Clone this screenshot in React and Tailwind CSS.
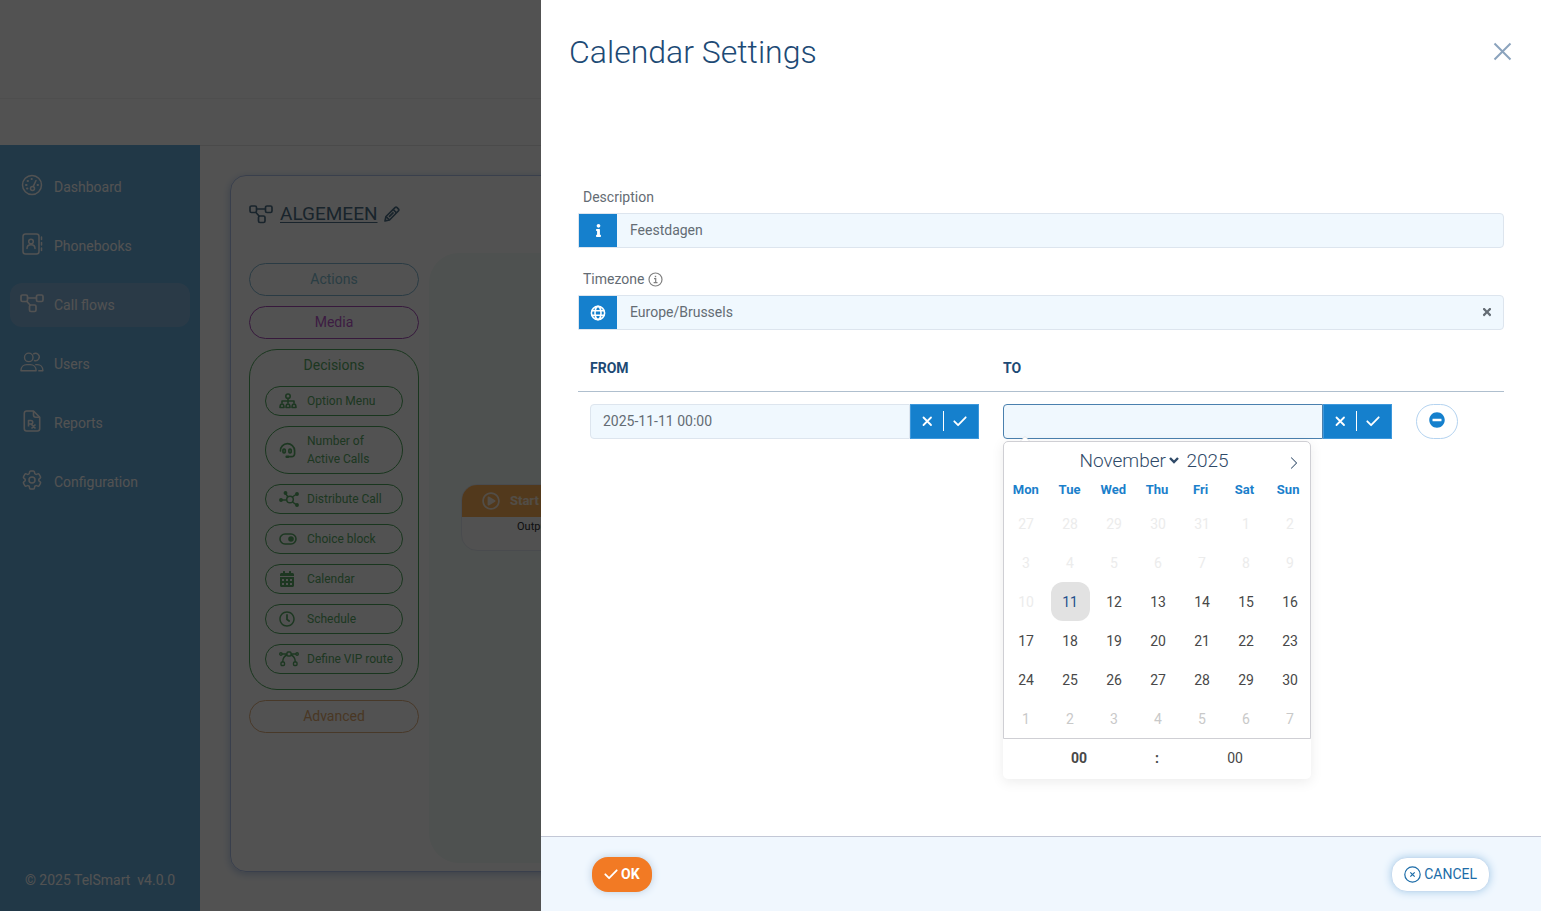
import React from "react";
import { FaCalendarAlt, FaInfo, FaMinusCircle, FaRegClock, FaRegPlayCircle, FaTimes } from "react-icons/fa";
import { BsChevronRight } from "react-icons/bs";
import { HiOutlineCog6Tooth } from "react-icons/hi2";

const GaugeIcon = () => (
  <svg width="22" height="22" viewBox="0 0 22 22" fill="none" stroke="currentColor" strokeWidth="1.5" strokeLinecap="round">
    <circle cx="11" cy="11" r="9.5" />
    <circle cx="11.5" cy="14.5" r="2" />
    <path d="M12.2 12.6 15 6.5" />
    <path d="M5 11h.6M6.6 7h.4M10.6 5h.2M16.6 11h.4M6 14.6h.4" strokeWidth="2" />
  </svg>
);

const BookIcon = () => (
  <svg width="22" height="22" viewBox="0 0 22 22" fill="none" stroke="currentColor" strokeWidth="1.5" strokeLinecap="round">
    <rect x="2" y="1" width="16" height="20" rx="2.5" />
    <circle cx="10" cy="8.5" r="2.3" />
    <path d="M6 15.5c0-2.4 1.5-3.7 4-3.7s4 1.3 4 3.7M20.5 4v2.5M20.5 9.5V12M20.5 15v2.5" />
  </svg>
);

const FlowIcon = () => (
  <svg width="24" height="20" viewBox="0 0 24 20" fill="none" stroke="currentColor" strokeWidth="1.7">
    <rect x="1" y="2" width="6.5" height="6.5" rx="1.5" />
    <rect x="16.5" y="2" width="6.5" height="6.5" rx="1.5" />
    <rect x="9.5" y="12" width="6.5" height="6.5" rx="1.5" />
    <path d="M7.5 5h9M6.5 8l4 4.5" />
  </svg>
);

const UsersIcon = () => (
  <svg width="26" height="22" viewBox="0 0 26 22" fill="none" stroke="currentColor" strokeWidth="1.5" strokeLinejoin="round">
    <circle cx="9.5" cy="6" r="4.6" />
    <path d="M1 20.5c0-4.3 3-6.6 6.5-6.6h3.5c3.5 0 6.5 2.3 6.5 6.6Z" />
    <path d="M14.3 2.5a4 4 0 1 1 .8 6.7M16.5 13.9h2.3c3.3 0 6 2.4 6 6.6h-5" />
  </svg>
);

const ReportIcon = () => (
  <svg width="18" height="22" viewBox="0 0 18 22" fill="none" stroke="currentColor" strokeWidth="1.6" strokeLinejoin="round">
    <path d="M10.5 1h-7A2.2 2.2 0 0 0 1.3 3.2v15.6A2.2 2.2 0 0 0 3.5 21h11a2.2 2.2 0 0 0 2.2-2.2V7.200Z" />
    <path d="M10.5 1v4a2.2 2.2 0 0 0 2.2 2.2h4" />
    <path d="M5.5 16.5v-6H8a1.7 1.7 0 0 1 0 3.5H5.5M8 14l4.5 4.5M12.5 14.5l-4 4" />
  </svg>
);

const SitemapIcon = () => (
  <svg width="18" height="16" viewBox="0 0 18 16" fill="none" stroke="currentColor" strokeWidth="1.6" strokeLinejoin="round">
    <circle cx="9" cy="3.2" r="2.2" />
    <path d="M9 5.5v5M3 10.5V8h12v2.5" />
    <path d="M1 14.500c0-2 .7-3.500 2-3.500s2 1.500 2 3.500ZM7 14.500c0-2 .7-3.500 2-3.500s2 1.500 2 3.500ZM13 14.500c0-2 .7-3.500 2-3.500s2 1.500 2 3.500Z" />
  </svg>
);

const AgentIcon = () => (
  <svg width="17" height="17" viewBox="0 0 18 18" fill="none" stroke="currentColor" strokeWidth="1.8" strokeLinecap="round">
    <path d="M1.500 9.500A7.500 7.500 0 0 1 16.500 9v3.500a3 3 0 0 1-3 3H9.500" />
    <rect x="4.2" y="7.5" width="2.4" height="4" rx="1" />
    <rect x="10.5" y="7.5" width="2.4" height="4" rx="1" />
    <path d="M9.5 15.6H8" strokeWidth="2.5" />
  </svg>
);

const NetworkIcon = () => (
  <svg width="20" height="16" viewBox="0 0 20 16" fill="currentColor" stroke="currentColor" strokeWidth="1.5">
    <circle cx="11" cy="8.5" r="3.3" fill="none" />
    <path d="M3 9h4.7M9 6 6.500 2.500M13.300 6l3.700-2.500M13.500 11l4 2.800" />
    <circle cx="2" cy="9" r="1.2" />
    <circle cx="6.5" cy="2" r="1.2" />
    <circle cx="18" cy="3" r="1.2" />
    <circle cx="18" cy="14" r="1.2" />
  </svg>
);

const ToggleIcon = () => (
  <svg width="18" height="12" viewBox="0 0 18 12" fill="none" stroke="currentColor" strokeWidth="1.6">
    <rect x="1" y="1" width="16" height="10" rx="5" />
    <circle cx="12" cy="6" r="2.8" fill="currentColor" stroke="none" />
  </svg>
);

const CurveIcon = () => (
  <svg width="20" height="16" viewBox="0 0 20 16" fill="none" stroke="currentColor" strokeWidth="1.4">
    <circle cx="1.9" cy="3" r="1.2" />
    <circle cx="18.1" cy="3" r="1.2" />
    <rect x="8" y="1" width="4" height="4" rx="1" />
    <rect x="2" y="11" width="3.5" height="3.5" rx="1" />
    <rect x="14.5" y="11" width="3.5" height="3.5" rx="1" />
    <path d="M3 3h5M12 3h5M8 4c-2.800 1-4.200 3.500-4.300 7M12 4c2.800 1 4.200 3.500 4.300 7" />
  </svg>
);

const PencilIcon = () => (
  <svg width="16" height="16" viewBox="0 0 16 16" fill="none" stroke="currentColor" strokeWidth="1.7" strokeLinejoin="round">
    <path d="m1 15 1-4.500L11 1.700a1.500 1.500 0 0 1 2.100 0l1.200 1.200a1.500 1.500 0 0 1 0 2.100L5.500 14Z" />
    <path d="m9.200 3.500 3.300 3.300M2 10.500 5.500 14M5 10.800l4.500-4.500" />
  </svg>
);

const GlobeIcon = () => (
  <svg width="16" height="16" viewBox="0 0 16 16" fill="none" stroke="currentColor" strokeWidth="1.6">
    <circle cx="8" cy="8" r="6.6" />
    <ellipse cx="8" cy="8" rx="3" ry="6.6" />
    <path d="M1.7 5.8h12.6M1.7 10.2h12.6" />
  </svg>
);

const InfoIcon = () => (
  <svg width="15" height="15" viewBox="0 0 15 15" fill="none" stroke="#808080" strokeWidth="1.2">
    <circle cx="7.5" cy="7.5" r="6.5" />
    <path d="M6 6.6h1.7v4M5.6 10.7h3.9" />
    <path d="M6.8 4.5h1.4" strokeWidth="1.4" />
  </svg>
);

const CheckIcon = () => (
  <svg width="14" height="14" viewBox="0 0 14 14" fill="none" stroke="currentColor" strokeWidth="1.8" strokeLinecap="round" strokeLinejoin="round">
    <path d="m1.300 7.300 3.800 3.900 7.600-7.900" />
  </svg>
);

const CrossIcon = () => (
  <svg width="12" height="12" viewBox="0 0 12 12" fill="none" stroke="currentColor" strokeWidth="1.8" strokeLinecap="round">
    <path d="m2.500 2.500 7.500 7.500M10 2.500 2.500 10" />
  </svg>
);

const CancelIcon = () => (
  <svg width="17" height="17" viewBox="0 0 17 17" fill="none" stroke="currentColor" strokeWidth="1.2">
    <circle cx="8.5" cy="8.5" r="7.7" />
    <path d="m6.300 6.300 4.400 4.400M10.700 6.300l-4.400 4.400" />
  </svg>
);

const menu = [
  { name: "Dashboard", icon: <GaugeIcon /> },
  { name: "Phonebooks", icon: <BookIcon /> },
  { name: "Call flows", icon: <FlowIcon />, active: true },
  { name: "Users", icon: <UsersIcon /> },
  { name: "Reports", icon: <ReportIcon /> },
  { name: "Configuration", icon: <HiOutlineCog6Tooth size={24} /> },
];

const decisions = [
  { name: "Option Menu", icon: <SitemapIcon /> },
  { name: "Number of Active Calls", icon: <AgentIcon /> },
  { name: "Distribute Call", icon: <NetworkIcon /> },
  { name: "Choice block", icon: <ToggleIcon /> },
  { name: "Calendar", icon: <FaCalendarAlt size={16} /> },
  { name: "Schedule", icon: <FaRegClock size={16} /> },
  { name: "Define VIP route", icon: <CurveIcon /> },
];

const weekdays = ["Mon", "Tue", "Wed", "Thu", "Fri", "Sat", "Sun"];

// six weeks, starting on Monday 27 October 2025
const days = Array.from({ length: 42 }, (_, i) => {
  const date = new Date(2025, 9, 27 + i);
  return {
    key: i,
    day: date.getDate(),
    disabled: i < 15,
    selected: i === 15,
    next: i > 34,
  };
});

const dayColor = (d) => {
  if (d.selected) return "rounded-xl bg-[#e2e2e2] text-[#24508c]";
  if (d.disabled) return "text-[#ececec]";
  if (d.next) return "text-[#c9c9c9]";
  return "text-[#484848]";
};

const Sidebar = () => (
  <aside className="flex w-[200px] shrink-0 flex-col justify-between bg-[#66addc] px-2.5 pt-5 pb-[21px] text-sm text-white">
    <nav className="flex flex-col gap-[15px]">
      {menu.map((item) => (
        <a
          key={item.name}
          href="#"
          className={
            item.active
              ? "flex h-11 items-center rounded-xl bg-[#84b4dc] px-2.5"
              : "flex h-11 items-center px-2.5"
          }
        >
          <span className="mr-2.5 mb-1 flex w-6 shrink-0 justify-center">{item.icon}</span>
          {item.name}
        </a>
      ))}
    </nav>
    <p className="text-center">© 2025 TelSmart &nbsp;v4.0.0</p>
  </aside>
);

const Blocks = () => (
  <div className="flex w-[170px] shrink-0 flex-col gap-2.5 pt-2.5 text-sm">
    <button className="h-[33px] rounded-full border border-[#84b8d2] pb-0.5 text-[#84c0d2]">Actions</button>
    <button className="h-[33px] rounded-full border border-[#aa50bc] pb-0.5 text-[#bc58cc]">Media</button>
    <div className="rounded-[28px] border border-[#50a85e] px-[15px] pt-[5px] pb-[15px] text-[#5aac68]">
      <h2 className="text-center leading-5">Decisions</h2>
      <div className="mt-[11px] flex flex-col gap-2.5 text-xs">
        {decisions.map((item) => (
          <button
            key={item.name}
            className="flex min-h-[30px] items-center rounded-[24px] border border-[#50a85e] py-[5px] pl-[13px] text-left leading-[18px]"
          >
            <span className="flex w-7 shrink-0">{item.icon}</span>
            <span className={item.name.length > 20 ? "w-20" : "whitespace-nowrap"}>{item.name}</span>
          </button>
        ))}
      </div>
    </div>
    <button className="h-[33px] rounded-full border border-[#e0b080] pb-0.5 text-[#e4ac70]">Advanced</button>
  </div>
);

const FlowPage = () => (
  <div className="flex h-screen flex-col bg-white">
    <div className="h-[99px] shrink-0 border-b border-[#f2f2f2]" />
    <div className="h-[46px] shrink-0" />
    <div className="flex min-h-0 flex-1">
      <Sidebar />
      <main className="flex min-w-0 flex-1 flex-col border-t border-[#e6e6e6] px-[30px] pt-[29px] pb-[39px]">
        <section className="flex flex-1 flex-col overflow-hidden rounded-[16px] border border-[#b0c4ec] px-[18px] pt-6 pb-2 shadow-[0_2px_8px_#b8cce8]">
          <div className="flex h-7 items-center text-[#4f7288]">
            <FlowIcon />
            <h1 className="mr-1.5 ml-[7px] text-[19px] leading-7 underline underline-offset-2">ALGEMEEN</h1>
            <button aria-label="Rename">
              <PencilIcon />
            </button>
          </div>
          <div className="mt-[25px] flex min-h-0 flex-1 gap-2.5">
            <Blocks />
            <div className="flex-1 rounded-[30px] bg-[#f2faf7] pt-[231px] pl-8">
              <div className="w-44 overflow-hidden rounded-[16px] border border-[#e4eaf2] bg-[#fafafa]">
                <div className="flex h-8 items-center gap-2.5 bg-[#ffb258] pl-5 text-[13px] font-bold text-white/80">
                  <FaRegPlayCircle size={18} />
                  Start
                </div>
                <p className="h-[33px] pt-0.5 pl-[55px] text-[11px] text-[#303030]">Output</p>
              </div>
            </div>
          </div>
        </section>
      </main>
    </div>
  </div>
);

const DateField = ({ id, label, value, open }) => (
  <div className="flex h-[35px]">
    <input
      id={id}
      aria-label={label}
      defaultValue={value}
      className={
        open
          ? "min-w-0 flex-1 rounded-l border border-[#4a80ae] bg-[#f0f8fe] px-3 outline-none"
          : "min-w-0 flex-1 rounded-l border border-[#dde5ee] bg-[#f0f8fe] px-3 outline-none"
      }
    />
    <div className="flex w-[69px] items-center border border-[#3d98dc] bg-[#1580cd] text-white">
      <button aria-label="Clear" className="flex w-8 justify-center">
        <CrossIcon />
      </button>
      <span className="h-5 w-px bg-white" />
      <button aria-label="Confirm" className="flex w-8 justify-center">
        <CheckIcon />
      </button>
    </div>
  </div>
);

const DatePicker = () => (
  <div className="absolute top-[49px] left-3 z-10 w-[308px] rounded-[5px] bg-white text-sm shadow-[0_3px_13px_rgba(0,0,0,0.08)]">
    <span className="absolute bottom-full left-[17px] border-[5px] border-transparent border-b-[#e6e6e6]" />
    <span className="absolute bottom-full left-[18px] border-4 border-transparent border-b-white" />
    <div className="rounded-t-[5px] border border-[#cfcfd4]">
      <div className="relative flex h-[35px] items-center justify-center pt-[3px] text-[19px] font-light text-[#2f4a68]">
        <div className="relative flex items-center">
          <select
            aria-label="Month"
            defaultValue="November"
            className="appearance-none bg-transparent pr-3.5 outline-none"
          >
            <option>November</option>
            <option>December</option>
          </select>
          <svg className="pointer-events-none absolute right-0.5" width="10" height="7" viewBox="0 0 10 7" fill="none" stroke="currentColor" strokeWidth="2.4">
            <path d="m1 1 4 4 4-4" />
          </svg>
        </div>
        <input aria-label="Year" defaultValue="2025" className="ml-1.5 w-12 bg-transparent outline-none" />
        <button aria-label="Next month" className="absolute top-3.5 right-[9px]">
          <BsChevronRight size={14} />
        </button>
      </div>
      <div className="grid h-[27px] grid-cols-7 text-center text-[13px] font-bold text-[#1b80cb]">
        {weekdays.map((name) => (
          <span key={name} className="leading-[25px]">{name}</span>
        ))}
      </div>
      <div className="grid w-[308px] grid-cols-7 justify-items-center">
        {days.map((d) => (
          <button key={d.key} disabled={d.disabled} className={"size-[39px] pt-0.5 " + dayColor(d)}>
            {d.day}
          </button>
        ))}
      </div>
    </div>
    <div className="flex h-10 items-center pb-0.5 text-[#484848]">
      <input aria-label="Hour" defaultValue="00" className="min-w-0 flex-1 bg-transparent text-center font-bold outline-none" />
      <span className="font-bold">:</span>
      <input aria-label="Minute" defaultValue="00" className="min-w-0 flex-1 bg-transparent text-center outline-none" />
    </div>
  </div>
);

const CalendarSettings = () => (
  <div
    role="dialog"
    aria-labelledby="dialogtitle"
    className="fixed inset-y-0 right-0 flex w-[1000px] max-w-full flex-col bg-white text-sm text-[#646c74]"
  >
    <header className="flex items-center justify-between px-7 pt-7">
      <h1 id="dialogtitle" className="text-[32px] leading-12 font-light text-[#1d4a75]">
        Calendar Settings
      </h1>
      <button aria-label="Close" className="pb-0.5">
        <svg width="21" height="21" viewBox="0 0 21 21" fill="none" stroke="#8ba3bd" strokeWidth="2">
          <path d="m2.500 2.500 16 16M18.500 2.500l-16 16" />
        </svg>
      </button>
    </header>

    <div className="flex-1 px-[37px] pt-[111px]">
      <label htmlFor="description" className="ml-[5px] block leading-5">
        Description
      </label>
      <div className="mt-1.5 flex h-[35px] overflow-hidden rounded-r border border-[#dde5ee] bg-[#f0f8fe]">
        <span className="flex w-[38px] items-center justify-center bg-[#1580cd] text-white">
          <FaInfo size={13} />
        </span>
        <input id="description" defaultValue="Feestdagen" className="flex-1 px-[13px] pb-0.5 outline-none" />
      </div>

      <div className="mt-[21px] ml-[5px] flex items-center gap-1 leading-5">
        <label htmlFor="timezone">Timezone</label>
        <InfoIcon />
      </div>
      <div className="mt-1.5 flex h-[35px] overflow-hidden rounded-r border border-[#dde5ee] bg-[#f0f8fe]">
        <span className="flex w-[38px] items-center justify-center bg-[#1580cd] text-white">
          <GlobeIcon />
        </span>
        <input id="timezone" defaultValue="Europe/Brussels" className="flex-1 px-[13px] pb-0.5 outline-none" />
        <button aria-label="Clear timezone" className="pr-2.5 pb-0.5">
          <FaTimes size={12} />
        </button>
      </div>

      <table className="mt-[15px] w-full table-fixed">
        <thead>
          <tr className="h-[46px] border-b border-[#afbfce] text-left text-[#1d4a75]">
            <th className="px-3 font-bold">FROM</th>
            <th className="px-3 font-bold">TO</th>
            <th className="w-[100px]" />
          </tr>
        </thead>
        <tbody>
          <tr>
            <td className="px-3 py-3">
              <DateField id="datefrom" label="From" value="2025-11-11 00:00" />
            </td>
            <td className="relative px-3 py-3">
              <DateField id="dateto" label="To" value="" open />
              <DatePicker />
            </td>
            <td className="px-3 py-3">
              <button
                aria-label="Remove period"
                className="flex h-[35px] w-[42px] items-center justify-center rounded-full border border-[#b4d3f0] pb-0.5 text-[#1580cd]"
              >
                <FaMinusCircle size={16} />
              </button>
            </td>
          </tr>
        </tbody>
      </table>
    </div>

    <footer className="flex h-[75px] items-center justify-between border-t border-[#c3c8d6] bg-[#f0f7fe] px-[51px]">
      <button className="flex h-[35px] items-center gap-[3px] rounded-[16px] bg-[#f27a24] px-3 font-bold text-white shadow-[0_0_8px_#b9cde0]">
        <CheckIcon />
        OK
      </button>
      <button className="flex h-[35px] items-center gap-[3px] rounded-[16px] border border-[#c8dcf0] bg-white px-3 text-[#1c6ca8] shadow-[0_0_8px_#a9cdea]">
        <CancelIcon />
        CANCEL
      </button>
    </footer>
  </div>
);

const App = () => {
  return (
    <div className="h-screen overflow-hidden font-[Roboto,sans-serif]">
      <FlowPage />
      <div className="fixed inset-0 bg-black/68" />
      <CalendarSettings />
    </div>
  );
};

export default App;
